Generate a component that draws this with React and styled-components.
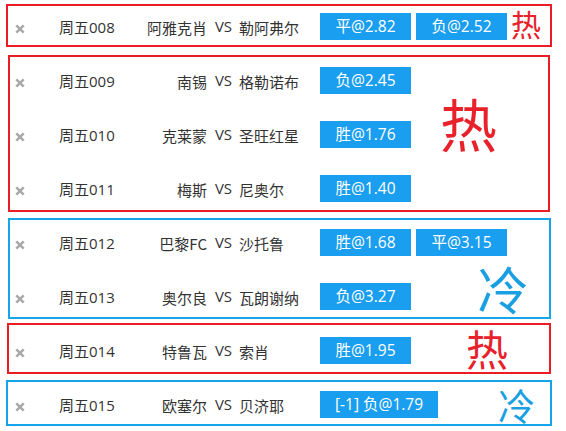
import React from "react";
import styled, { createGlobalStyle } from "styled-components";

const Global = createGlobalStyle`
  html, body { margin: 0; padding: 0; background: #fff; }
  body { font-family: "Open Sans", "Noto Sans CJK SC", sans-serif; color: #333; }
`;

const RED = "#ec1c24";
const BLUE = "#15a6ea";

const Page = styled.div`
  width: 566px;
  padding-top: 4px;
  display: flex;
  flex-direction: column;
`;

const Group = styled.section`
  position: relative;
  box-sizing: border-box;
  border: 2px solid ${(p) => (p.$hot ? RED : BLUE)};
  margin: ${(p) => p.$mt}px ${(p) => 566 - p.$right}px 0 ${(p) => p.$left}px;
  padding: ${(p) => p.$pt}px 0 ${(p) => p.$pb}px ${(p) => 15 - p.$left - 2}px;
  display: flex;
  flex-direction: column;
  gap: 27px;
`;

const Row = styled.div`
  display: grid;
  grid-template-columns: 44px 70px 78px 32px 81px auto;
  align-items: center;
  height: 27px;
  font-size: 15px;
  line-height: 27px;
`;

const Close = styled.span`
  display: flex;
  align-items: center;
  padding-top: 5px;
`;

const Cell = styled.span`
  white-space: nowrap;
  padding-top: 3px;
  text-align: ${(p) => p.$align || "left"};
  font-family: "Noto Sans CJK SC", sans-serif;
`;

const Code = styled(Cell)`
  font-family: "Open Sans", "Noto Sans CJK SC", sans-serif;
`;

const Vs = styled(Cell)`
  text-align: center;
  font-family: "Open Sans", sans-serif;
  padding-top: 0;
  padding-left: 1px;
`;

const Odds = styled.div`
  display: flex;
  gap: 5px;
`;

const OddBtn = styled.span`
  display: inline-flex;
  align-items: center;
  justify-content: center;
  height: 27px;
  min-width: 91px;
  box-sizing: border-box;
  padding: 0 15px;
  background: #1a9ef0;
  color: #fff;
  font-size: 15.5px;
  font-family: "Open Sans", "Noto Sans CJK SC", sans-serif;
  white-space: nowrap;
`;

const Stamp = styled.span`
  position: absolute;
  left: ${(p) => p.$x}px;
  top: ${(p) => p.$y}px;
  transform: translate(-50%, -50%);
  font-family: "Noto Sans CJK SC", sans-serif;
  font-size: ${(p) => p.$size}px;
  line-height: 1;
  color: ${(p) => (p.$hot ? "#e8212b" : "#1a9fe2")};
`;

const XIcon = () => (
  <svg width="10" height="10" viewBox="0 0 10 10">
    <path d="M1.3 1.3 L8.7 8.7 M8.7 1.3 L1.3 8.7" stroke="#a8a8a8" strokeWidth="2.5" />
  </svg>
);

const groups = [
  {
    hot: true, left: 6, right: 552, mt: 0, top: 4, pt: 5, pb: 7,
    stamp: { x: 526, y: 22.5, size: 30 },
    rows: [["周五008", "阿雅克肖", "勒阿弗尔", ["平@2.82", "负@2.52"]]],
  },
  {
    hot: true, left: 8, right: 550, mt: 8, top: 55, pt: 8, pb: 10,
    stamp: { x: 468.5, y: 121.5, size: 57 },
    rows: [
      ["周五009", "南锡", "格勒诺布", ["负@2.45"]],
      ["周五010", "克莱蒙", "圣旺红星", ["胜@1.76"]],
      ["周五011", "梅斯", "尼奥尔", ["胜@1.40"]],
    ],
  },
  {
    hot: false, left: 8, right: 551, mt: 6, top: 218, pt: 7, pb: 9,
    stamp: { x: 503, y: 287.5, size: 51 },
    rows: [
      ["周五012", "巴黎FC", "沙托鲁", ["胜@1.68", "平@3.15"]],
      ["周五013", "奥尔良", "瓦朗谢纳", ["负@3.27"]],
    ],
  },
  {
    hot: true, left: 7, right: 551, mt: 4, top: 323, pt: 10, pb: 10,
    stamp: { x: 487, y: 347.5, size: 42 },
    rows: [["周五014", "特鲁瓦", "索肖", ["胜@1.95"]]],
  },
  {
    hot: false, left: 6, right: 552, mt: 6, top: 380, pt: 7, pb: 8,
    stamp: { x: 516.5, y: 405, size: 37 },
    rows: [["周五015", "欧塞尔", "贝济耶", ["[-1] 负@1.79"]]],
  },
];

export default function App() {
  return (
    <>
      <Global />
      <Page>
        {groups.map((g, gi) => (
          <Group key={gi} $hot={g.hot} $left={g.left} $right={g.right} $mt={g.mt} $pt={g.pt} $pb={g.pb}>
            {g.rows.map(([code, home, away, odds]) => (
              <Row key={code}>
                <Close><XIcon /></Close>
                <Code>{code}</Code>
                <Cell $align="right">{home}</Cell>
                <Vs>VS</Vs>
                <Cell>{away}</Cell>
                <Odds>
                  {odds.map((o) => (
                    <OddBtn key={o}>{o}</OddBtn>
                  ))}
                </Odds>
              </Row>
            ))}
            <Stamp $hot={g.hot} $x={g.stamp.x - g.left - 2} $y={g.stamp.y - g.top - 2} $size={g.stamp.size}>
              {g.hot ? "热" : "冷"}
            </Stamp>
          </Group>
        ))}
      </Page>
    </>
  );
}
